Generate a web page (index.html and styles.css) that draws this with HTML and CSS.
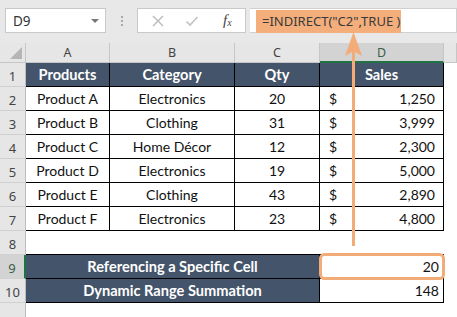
FILE: index.html
```html
<!DOCTYPE html>
<html>
<head>
<meta charset="utf-8">
<link rel="stylesheet" href="styles.css">
</head>
<body>
<div class="app">
  <div class="toolbar">
    <div class="namebox"><span class="nb-text">D9</span><span class="nb-arrow"></span></div>
    <div class="dots"><i></i><i></i><i></i></div>
    <div class="fxbox">
      <svg class="ic" width="14" height="14" viewBox="0 0 14 14"><path d="M2 2 L12 12 M12 2 L2 12" stroke="#b9b9b9" stroke-width="1.4" fill="none"/></svg>
      <svg class="ic" width="14" height="14" viewBox="0 0 14 14"><path d="M1.5 7.5 L5 11 L12.5 3" stroke="#c2c2c2" stroke-width="1.6" fill="none"/></svg>
      <span class="fx">f<sub>x</sub></span>
    </div>
    <div class="formula"><span class="hl">=INDIRECT("C2",TRUE )</span></div>
  </div>
  <div class="sheet">
    <div class="ch corner"><span class="tri"></span></div>
    <div class="ch">A</div><div class="ch">B</div><div class="ch">C</div><div class="ch sel">D</div><div class="ch"></div>

    <div class="rh">1</div>
    <div class="c hd">Products</div><div class="c hd">Category</div><div class="c hd">Qty</div><div class="c hd">Sales</div><div class="f"></div>

    <div class="rh">2</div>
    <div class="c">Product A</div><div class="c">Electronics</div><div class="c">20</div><div class="c acct"><span>$</span><span>1,250</span></div><div class="f"></div>

    <div class="rh">3</div>
    <div class="c">Product B</div><div class="c">Clothing</div><div class="c">31</div><div class="c acct"><span>$</span><span>3,999</span></div><div class="f"></div>

    <div class="rh">4</div>
    <div class="c">Product C</div><div class="c">Home Décor</div><div class="c">12</div><div class="c acct"><span>$</span><span>2,300</span></div><div class="f"></div>

    <div class="rh">5</div>
    <div class="c">Product D</div><div class="c">Electronics</div><div class="c">19</div><div class="c acct"><span>$</span><span>5,000</span></div><div class="f"></div>

    <div class="rh">6</div>
    <div class="c">Product E</div><div class="c">Clothing</div><div class="c">43</div><div class="c acct"><span>$</span><span>2,890</span></div><div class="f"></div>

    <div class="rh">7</div>
    <div class="c">Product F</div><div class="c">Electronics</div><div class="c">23</div><div class="c acct"><span>$</span><span>4,800</span></div><div class="f"></div>

    <div class="rh">8</div>
    <div class="e"></div><div class="e"></div><div class="e"></div><div class="e"></div><div class="f"></div>

    <div class="rh rsel">9</div>
    <div class="c hd merged">Referencing a Specific Cell</div><div class="c num sel9">20</div><div class="f"></div>

    <div class="rh">10</div>
    <div class="c hd merged">Dynamic Range Summation</div><div class="c num">148</div><div class="f"></div>

    <div class="rh last"></div>
    <div class="f wide"></div>
  </div>
  <svg class="overlay" width="457" height="317" viewBox="0 0 457 317">
    <line x1="353.5" y1="50" x2="353.5" y2="246" stroke="#f3ab78" stroke-width="3"/>
    <path d="M353.5 32 L362 56 L353.5 51 L345 56 Z" fill="#f3ab78"/>
    <rect x="320.5" y="254.5" width="123" height="24" rx="4" ry="4" fill="none" stroke="#f3ab78" stroke-width="3"/>
  </svg>
</div>
</body>
</html>
```

FILE: styles.css
```css
* { box-sizing: border-box; }
html, body { margin: 0; padding: 0; }
body { width: 457px; height: 317px; overflow: hidden; background: #fff; }

.app { position: relative; width: 457px; height: 317px; overflow: hidden; }

.toolbar {
  height: 43px;
  background: #e8e8e8;
  display: flex;
  align-items: flex-start;
  padding-top: 8px;
  font-family: "Noto Sans", sans-serif;
}

.namebox {
  margin-left: 5px;
  width: 101px;
  height: 25px;
  background: #fff;
  border: 1px solid #c9c9c9;
  display: flex;
  align-items: center;
  justify-content: space-between;
  padding: 0 6px 0 7px;
}
.nb-text { font-size: 13.5px; color: #333; }
.nb-arrow {
  width: 0; height: 0;
  border-left: 4px solid transparent;
  border-right: 4px solid transparent;
  border-top: 4px solid #777;
}

.dots {
  width: 31px;
  height: 25px;
  display: flex;
  flex-direction: column;
  align-items: center;
  justify-content: center;
  gap: 2px;
}
.dots i { display: block; width: 2px; height: 2px; background: #a8a8a8; }

.fxbox {
  width: 109px;
  height: 25px;
  background: #fff;
  border: 1px solid #c9c9c9;
  display: flex;
  align-items: center;
  padding-left: 13px;
  gap: 20px;
}
.ic { display: block; }
.fx {
  font-family: "Liberation Serif", serif;
  font-style: italic;
  font-size: 15px;
  color: #444;
  margin-left: 4px;
}
.fx sub { font-size: 10px; vertical-align: -1px; }

.formula {
  margin-left: 4px;
  flex: 1;
  height: 25px;
  background: #fff;
  border: 1px solid #d0d0d0;
  border-left: none;
  padding-left: 6px;
}
.hl {
  display: inline-block;
  height: 23px;
  line-height: 23px;
  margin-top: -1px;
  background: #f3ae7c;
  color: #3a3a3a;
  font-size: 13px;
  padding: 0 2px 0 6px;
  width: 145px;
  white-space: nowrap;
}

.sheet {
  display: grid;
  grid-template-columns: 26px 84px 125px 85px 124px 1fr;
  grid-template-rows: 20px repeat(10, 24px) 1fr;
  height: 274px;
  font-family: Lato, "Liberation Sans", sans-serif;
  font-size: 14px;
  color: #111;
}

.ch {
  background: #e6e6e6;
  border-right: 1px solid #c6c6c6;
  border-bottom: 1px solid #c6c6c6;
  font-family: "Noto Sans", sans-serif;
  font-size: 12.5px;
  color: #444;
  display: flex;
  align-items: center;
  justify-content: center;
}
.ch.sel { background: #d3d3d3; border-bottom: 2px solid #217346; color: #3b5e48; }
.corner { position: relative; }
.tri {
  position: absolute;
  right: 3px; bottom: 3px;
  width: 0; height: 0;
  border-left: 12px solid transparent;
  border-bottom: 12px solid #b5b5b5;
}

.rh {
  background: #e6e6e6;
  border-right: 1px solid #bdbdbd;
  border-bottom: 1px solid #d0d0d0;
  font-family: "Noto Sans", sans-serif;
  font-size: 13px;
  color: #444;
  display: flex;
  align-items: center;
  justify-content: center;
  padding-top: 2px;
}
.rh.rsel { background: #d3d3d3; border-right: 2px solid #217346; color: #3b5e48; }
.rh.last { border-bottom: none; }

.c {
  border-right: 1px solid #000;
  border-bottom: 1px solid #000;
  display: flex;
  align-items: center;
  justify-content: center;
  white-space: nowrap;
  background: #fff;
}
.c.hd { background: #44546a; color: #fff; font-weight: bold; font-size: 14.6px; }
.c.acct { justify-content: space-between; padding: 0 8px 0 9px; }
.c.num { justify-content: flex-end; padding-right: 4px; }
.merged { grid-column: span 3; }
.e { border-bottom: 1px solid #000; background: #fff; }
.f { background: #fff; }
.wide { grid-column: span 5; }

.overlay { position: absolute; left: 0; top: 0; pointer-events: none; }
```
